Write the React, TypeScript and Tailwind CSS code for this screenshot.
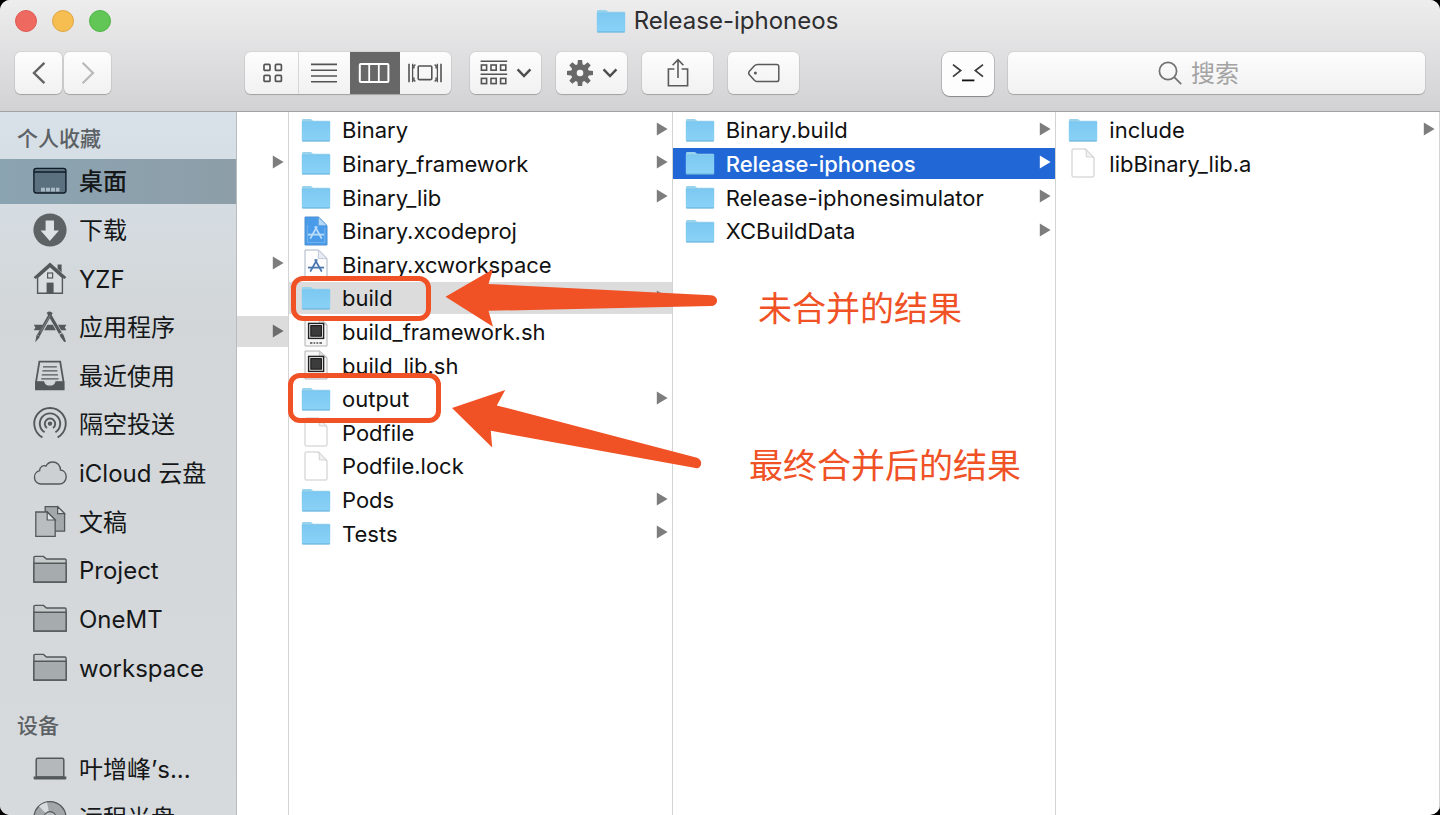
import type { ReactNode } from "react";

const INK = "#53585b";

type IconProps = { children: ReactNode };

function SideIcon({ children }: IconProps) {
  return (
    <svg viewBox="0 0 34 34" className="size-[34px] shrink-0" fill="none" stroke={INK} strokeWidth="1.5" aria-hidden="true">
      {children}
    </svg>
  );
}

const sideIcons: Record<string, ReactNode> = {
  desktop: (
    <SideIcon>
      <rect x="0.9" y="4.4" width="32" height="24.6" rx="2.4" fill="#5c7180" stroke="#101d26" strokeWidth="1.4" />
      <path d="M1 8h32" stroke="#101d26" strokeWidth="1.3" />
      <path d="M8 27.4v-3.6h4v3.6zM13 27.4v-3.6h4v3.6zM18 27.4v-3.6h4v3.6zM23 27.4v-3.6h3.4v3.6z" fill="#a9bac4" stroke="none" />
    </SideIcon>
  ),
  downloads: (
    <SideIcon>
      <circle cx="17" cy="17" r="16.6" fill="#5d6265" stroke="none" />
      <path d="M12.6 7.6h8.4v10h5L16.8 28 7.6 17.6h5z" fill="#dce1e3" stroke="none" />
    </SideIcon>
  ),
  home: (
    <SideIcon>
      <path d="M24.6 2.6h4v8l-4-3.8z" fill={INK} stroke="none" />
      <path d="M4.6 15.6v15.6h24.8V15.6L17 4.4z" fill="#d9dddf" stroke={INK} strokeWidth="1.4" />
      <path d="M.6 15.2 17 .6l16.4 14.6-2.2 1.9L17 4.6 2.8 17.1z" fill={INK} stroke="none" />
      <rect x="14.6" y="11" width="5" height="5" strokeWidth="1.2" />
      <path d="M13.6 20.6h7v10.6h-7z" fill={INK} stroke="none" />
    </SideIcon>
  ),
  apps: (
    <SideIcon>
      <path d="M.8 14.8H10l-3.2 5.4H.8l1.6-2.7zM14.4 14.8h5.4l3 5.4H11.2zM25 14.8h8.4l-1.6 2.7 1.6 2.7h-5.2z" fill={INK} stroke="none" />
      <path d="M18.4 2.2 5.4 25.6" strokeWidth="3" />
      <path d="m3.6 24.8 3.4 2-4.8 5.4z" fill={INK} stroke="none" />
      <path d="m15 2 14 24" strokeWidth="3.2" />
      <path d="m27.2 26.4 3.2-1.8 2.6 6.8-1.8.6z" fill={INK} stroke="none" />
      <path d="M17 5.6 7.4 22.4" stroke="#8c9194" strokeWidth="0.8" />
      <path d="M25.8 24.6l4-2.4" stroke="#d4d8da" strokeWidth="1" />
    </SideIcon>
  ),
  recents: (
    <SideIcon>
      <path d="M6.4 2.6h20.8l3.4 20.6v7.2H3v-7.2z" fill="#d2d6d8" strokeWidth="1.8" />
      <path d="M10 7.8h13.8M9.4 11.8h15M8.8 15.8h16.2M8.2 19.8h17.4" strokeWidth="1.2" />
      <path d="M3 22.8h7.6c.8 3.2 3 4.4 6.2 4.4s5.4-1.2 6.2-4.4h7.6v7.6H3z" fill={INK} strokeWidth="1.2" />
    </SideIcon>
  ),
  airdrop: (
    <SideIcon>
      <circle cx="17" cy="16.6" r="2.2" fill={INK} stroke="none" />
      <path d="M14 21a5.2 5.2 0 1 1 6 0" strokeWidth="1.9" />
      <path d="M11.6 25.2a10.2 10.2 0 1 1 10.8 0" strokeWidth="1.9" />
      <path d="M9.4 30.4a15.7 15.7 0 1 1 15.2 0" strokeWidth="1.9" />
    </SideIcon>
  ),
  cloud: (
    <SideIcon>
      <path d="M8 28a6.8 6.8 0 0 1-1.4-13.4c0-3.6 3.4-5.8 6.4-4.6C14.4 7.4 16.8 6 19.6 6c4.6 0 7.8 3.4 7.9 8 3.3.4 5.7 3.2 5.7 6.8 0 4-3 7.2-7 7.2z" fill="#cdd0d2" strokeWidth="1.4" />
    </SideIcon>
  ),
  documents: (
    <SideIcon>
      <path d="M12.2 1.6h12.4l7 7v17.6H12.2z" fill="#a3a8aa" strokeWidth="1.3" />
      <path d="M24.6 1.6v7h7z" fill="#d9dcde" strokeWidth="1.2" />
      <path d="M2.8 7h11.4l8 8v16.4H2.8z" fill="#b9bdbf" strokeWidth="1.3" />
      <path d="M14.2 7v8h8z" fill="#e2e5e6" strokeWidth="1.2" />
    </SideIcon>
  ),
  folder: (
    <SideIcon>
      <path d="M.9 29V4.6c0-.8.5-1.2 1.2-1.2h8.4l3 2.6h18.4c.8 0 1.2.4 1.2 1.2V29z" fill="#c6cacb" strokeWidth="1.4" />
      <path d="M.9 10.2h32.2V29H.9z" fill="#a6acad" strokeWidth="1.4" />
    </SideIcon>
  ),
  laptop: (
    <SideIcon>
      <path d="M3.2 25V7.8c0-1 .6-1.6 1.6-1.6h24.4c1 0 1.6.6 1.6 1.6V25z" fill="#b5b8ba" strokeWidth="1.5" />
      <path d="M.6 24.4h32.8v1.8c0 .8-.6 1.3-1.4 1.3H2c-.8 0-1.4-.5-1.4-1.3z" fill={INK} stroke="none" />
    </SideIcon>
  ),
  disc: (
    <SideIcon>
      <circle cx="17" cy="16.6" r="16" fill="#a2a6a8" strokeWidth="1.2" />
      <path d="M17 16.6 6 5.2a16 16 0 0 1 8-4zM17 16.6 28 28a16 16 0 0 0 4-5z" fill="#d8dbdc" stroke="none" />
      <circle cx="17" cy="16.6" r="6" fill="#bcc0c2" strokeWidth="1.1" />
      <circle cx="17" cy="16.6" r="2.4" fill="#e6e8e9" strokeWidth="1" />
    </SideIcon>
  ),
};

function FolderGlyph() {
  return (
    <svg viewBox="0 0 30 24" className="h-6 w-[30px]" aria-hidden="true">
      <defs>
        <linearGradient id="folderFront" x1="0" y1="0" x2="0" y2="1">
          <stop offset="0" stopColor="#7cc9f2" />
          <stop offset="1" stopColor="#8ad1f6" />
        </linearGradient>
      </defs>
      <path d="M1 22V2.4C1 1.6 1.5 1 2.3 1h7.2c1.4 0 1.8 1.8 3.2 1.8h15.1c.8 0 1.2.4 1.2 1.2V22z" fill="#98d3ee" />
      <path d="M.8 4h28.4v18c0 .8-.5 1.2-1.3 1.2H2.1c-.8 0-1.3-.4-1.3-1.2z" fill="url(#folderFront)" />
      <path d="M.8 4h28.4" stroke="#79c2e9" strokeWidth="0.7" />
      <path d="M1.2 23h27.6" stroke="#62aed8" strokeWidth="1" />
    </svg>
  );
}

function PageGlyph() {
  return (
    <svg viewBox="0 0 24 30" className="h-[30px] w-6" aria-hidden="true">
      <path d="M1 2c0-.6.4-1 1-1h12.4L23 9.6V28c0 .6-.4 1-1 1H2c-.6 0-1-.4-1-1z" fill="#fff" stroke="#c9c9c9" />
      <path d="M14.4 1c1.4 2.6.6 5.4.8 7.8 2.4.4 5.6-.2 7.8.8z" fill="#f1f1f1" stroke="#c9c9c9" strokeWidth="0.8" />
    </svg>
  );
}

function ProjectGlyph({ filled }: { filled?: boolean }) {
  const line = filled ? "#b9dcfa" : "#4a78ae";
  return (
    <svg viewBox="0 0 24 30" className="h-[30px] w-6" aria-hidden="true">
      <path d="M1 1h13.4L23 9.6V29H1z" fill={filled ? "#4a9bea" : "#fdfdfe"} stroke={filled ? "#4a8fd0" : "#a9b4c4"} />
      <path d="M14.4 1v8.6H23z" fill={filled ? "#b5d8f7" : "#e9edf3"} stroke={filled ? "#5fa3e0" : "#b4bece"} strokeWidth="0.8" />
      {filled && <path d="M3.4 9v17.4h17.4V12" fill="none" stroke="#7db9f0" strokeWidth="0.8" />}
      <path d="M4 18.6h16" stroke={line} strokeWidth="1.8" />
      <path d="m12.8 11-6.2 11M11.2 11l6.2 11" fill="none" stroke={line} strokeWidth="1.7" strokeLinecap="round" />
    </svg>
  );
}

function ShellGlyph() {
  return (
    <svg viewBox="0 0 24 30" className="h-[30px] w-6" aria-hidden="true">
      <path d="M1 1h14.4L23 7.6V29H1z" fill="#f7f7f7" stroke="#b2b2b2" />
      <path d="M15.4 1v6.6H23z" fill="#dedede" stroke="#bcbcbc" strokeWidth="0.8" />
      <rect x="4.6" y="6.4" width="15" height="15" fill="#f0f0f0" stroke="#222" strokeWidth="1.4" />
      <rect x="6.8" y="8.6" width="10.6" height="10.6" fill="#3c3c3c" stroke="#111" strokeWidth="1" />
      <path d="M6 26h2.4M9.6 26h1.6M12.4 26h1.8M15.4 26h2.6" stroke="#777" strokeWidth="2" />
    </svg>
  );
}

type Kind = "folder" | "page" | "xcodeproj" | "xcworkspace" | "shell";

function FileGlyph({ kind }: { kind: Kind }) {
  if (kind === "folder") return <FolderGlyph />;
  if (kind === "page") return <PageGlyph />;
  if (kind === "shell") return <ShellGlyph />;
  return <ProjectGlyph filled={kind === "xcodeproj"} />;
}

function Disclosure() {
  return (
    <svg viewBox="0 0 12 14" className="mb-0.5 h-3.5 w-3 shrink-0 fill-current" aria-hidden="true">
      <path d="M.8.6 11.6 7 .8 13.4z" />
    </svg>
  );
}

type Entry = { name: string; kind: Kind; arrow?: boolean; state?: "path" | "active" };

const columns: Entry[][] = [
  [
    { name: "Binary", kind: "folder", arrow: true },
    { name: "Binary_framework", kind: "folder", arrow: true },
    { name: "Binary_lib", kind: "folder", arrow: true },
    { name: "Binary.xcodeproj", kind: "xcodeproj" },
    { name: "Binary.xcworkspace", kind: "xcworkspace" },
    { name: "build", kind: "folder", arrow: true, state: "path" },
    { name: "build_framework.sh", kind: "shell" },
    { name: "build_lib.sh", kind: "shell" },
    { name: "output", kind: "folder", arrow: true },
    { name: "Podfile", kind: "page" },
    { name: "Podfile.lock", kind: "page" },
    { name: "Pods", kind: "folder", arrow: true },
    { name: "Tests", kind: "folder", arrow: true },
  ],
  [
    { name: "Binary.build", kind: "folder", arrow: true },
    { name: "Release-iphoneos", kind: "folder", arrow: true, state: "active" },
    { name: "Release-iphonesimulator", kind: "folder", arrow: true },
    { name: "XCBuildData", kind: "folder", arrow: true },
  ],
  [
    { name: "include", kind: "folder", arrow: true },
    { name: "libBinary_lib.a", kind: "page" },
  ],
];

const rowTone = {
  none: "text-[#111]",
  path: "bg-[#dcdcdc] text-[#111]",
  active: "bg-[#2167d6] text-white font-medium",
};

const arrowTone = {
  none: "text-[#7d7d7d]",
  path: "text-[#7d7d7d]",
  active: "text-white",
};

const listGrid = "grid h-[707px] grid-rows-[repeat(21,minmax(0,1fr))] pt-px";

function FileColumn({ entries }: { entries: Entry[] }) {
  return (
    <div className="min-w-0 flex-1 overflow-hidden border-r border-[#d3d3d3]">
      <ul className={listGrid}>
        {entries.map((e) => (
          <li key={e.name} className="flex py-px">
            <button type="button" className={`flex w-full items-center pr-1 pl-3 text-left text-[22px] leading-none ${rowTone[e.state ?? "none"]}`}>
              <span className="flex w-[30px] shrink-0 justify-center">
                <FileGlyph kind={e.kind} />
              </span>
              <span className="ml-[11px] flex-1 pt-px whitespace-nowrap">{e.name}</span>
              {e.arrow && (
                <span className={arrowTone[e.state ?? "none"]}>
                  <Disclosure />
                </span>
              )}
            </button>
          </li>
        ))}
      </ul>
    </div>
  );
}

type Place = { label: string; icon: string; current?: boolean };

const favorites: Place[] = [
  { label: "桌面", icon: "desktop", current: true },
  { label: "下载", icon: "downloads" },
  { label: "YZF", icon: "home" },
  { label: "应用程序", icon: "apps" },
  { label: "最近使用", icon: "recents" },
  { label: "隔空投送", icon: "airdrop" },
  { label: "iCloud 云盘", icon: "cloud" },
  { label: "文稿", icon: "documents" },
  { label: "Project", icon: "folder" },
  { label: "OneMT", icon: "folder" },
  { label: "workspace", icon: "folder" },
];

const devices: Place[] = [
  { label: "叶增峰’s...", icon: "laptop" },
  { label: "远程光盘", icon: "disc" },
];

function PlaceRow({ place }: { place: Place }) {
  return (
    <li className="flex py-0.5">
      <button
        type="button"
        className={`flex w-full items-center gap-3 pl-[33px] text-left text-2xl leading-none whitespace-nowrap text-[#151719] ${place.current ? "bg-linear-to-r from-[#8ba4b2] to-[#8d9ea8] font-medium" : ""}`}
      >
        {sideIcons[place.icon]}
        <span className="pt-0.5">{place.label}</span>
      </button>
    </li>
  );
}

function Sidebar() {
  return (
    <nav aria-label="边栏" className="w-[237px] shrink-0 overflow-hidden border-r border-[#b9bcbe] bg-linear-to-b from-[#d8e1e9] via-[#d2d6d8] via-30% to-[#d7dadc]">
      <h2 className="flex h-[45px] items-center pt-2 pl-[17px] text-[21px] leading-none font-medium text-[#5c6165]">个人收藏</h2>
      <ul className="grid h-[535px] grid-rows-[repeat(11,minmax(0,1fr))]">
        {favorites.map((p) => (
          <PlaceRow key={p.label} place={p} />
        ))}
      </ul>
      <h2 className="flex h-[53px] items-center pt-3.5 pl-[17px] text-[21px] leading-none font-medium text-[#5c6165]">设备</h2>
      <ul className="grid h-[97px] grid-rows-2">
        {devices.map((p) => (
          <PlaceRow key={p.label} place={p} />
        ))}
      </ul>
    </nav>
  );
}

const buttonSkin = "bg-linear-to-b from-[#fdfdfd] to-[#f1f1f1] shadow-[0_0_0_1px_rgba(0,0,0,0.05),0_1px_1px_rgba(0,0,0,0.2)]";

function ToolButton({ label, width, children }: { label: string; width: string; children: ReactNode }) {
  return (
    <button type="button" aria-label={label} className={`flex h-[42px] items-center justify-center gap-2 rounded-md ${width} ${buttonSkin}`}>
      {children}
    </button>
  );
}

function ChevronDown() {
  return (
    <svg viewBox="0 0 16 10" className="h-2.5 w-4" fill="none" stroke="#4e4e4e" strokeWidth="2.5" aria-hidden="true">
      <path d="m1.6 1.4 6.4 6.6 6.4-6.6" />
    </svg>
  );
}

function Gear() {
  return (
    <svg viewBox="-14 -14 28 28" className="size-7" aria-hidden="true">
      <g fill="#686868">
        {[0, 45, 90, 135, 180, 225, 270, 315].map((a) => (
          <path key={a} d="M-2.1-13h4.2L2.8-7h-5.6z" transform={`rotate(${a})`} />
        ))}
      </g>
      <circle r="6.2" fill="none" stroke="#686868" strokeWidth="5.8" />
    </svg>
  );
}

function Toolbar() {
  return (
    <div className="flex h-[68px] items-start px-[15px] pt-[9px]">
      <div className="flex gap-0.5">
        <ToolButton label="后退" width="w-[47px]">
          <svg viewBox="0 0 14 24" className="h-6 w-3.5" fill="none" stroke="#636363" strokeWidth="2.4" aria-hidden="true">
            <path d="M12.4 1.8 2 12l10.4 10.2" />
          </svg>
        </ToolButton>
        <ToolButton label="前进" width="w-[47px]">
          <svg viewBox="0 0 14 24" className="h-6 w-3.5" fill="none" stroke="#b9b9b9" strokeWidth="2.2" aria-hidden="true">
            <path d="M1.6 1.8 12 12 1.6 22.2" />
          </svg>
        </ToolButton>
      </div>

      <div className={`ml-[134px] flex h-[42px] w-[206px] overflow-hidden rounded-md ${buttonSkin}`}>
        <button type="button" aria-label="图标显示" className="flex w-[54px] items-center justify-center border-r border-[#d6d6d6] pl-0.5">
          <svg viewBox="0 0 20 20" className="size-5" fill="none" stroke="#545454" strokeWidth="1.7" aria-hidden="true">
            <rect x="1" y="1.4" width="6" height="6" rx="1" />
            <rect x="12.4" y="1.4" width="6" height="6" rx="1" />
            <rect x="1" y="12.4" width="6" height="6" rx="1" />
            <rect x="12.4" y="12.4" width="6" height="6" rx="1" />
          </svg>
        </button>
        <button type="button" aria-label="列表显示" className="flex flex-1 items-center justify-center pr-0.5">
          <svg viewBox="0 0 26 20" className="h-5 w-[26px]" stroke="#545454" strokeWidth="1.6" aria-hidden="true">
            <path d="M0 1.4h26M0 7.2h26M0 13h26M0 18.8h26" />
          </svg>
        </button>
        <button type="button" aria-label="分栏显示" aria-pressed="true" className="flex w-[50px] items-center justify-center bg-[#676767] pr-0.5">
          <svg viewBox="0 0 32 22" className="h-[22px] w-8" fill="none" stroke="#fff" aria-hidden="true">
            <rect x="1.8" y="2" width="28.6" height="18" rx="1" strokeWidth="2" />
            <path d="M11.2 2v18M20.8 2v18" strokeWidth="1.8" />
          </svg>
        </button>
        <button type="button" aria-label="画廊显示" className="flex w-[51px] items-center justify-center pr-0.5">
          <svg viewBox="0 0 34 20" className="h-5 w-[34px]" fill="none" stroke="#545454" strokeWidth="1.6" aria-hidden="true">
            <rect x="10.2" y="3" width="13.6" height="13.6" rx="1" />
            <path d="M1 .8v18.4M33 .8v18.4" strokeWidth="1.6" />
            <path d="M4.6.8v18.4M29.4.8v18.4M7.4 1.6l-1.4 1v3M7.4 18.4l-1.4-1v-3M26.6 1.6l1.4 1v3M26.6 18.4l1.4-1v-3" strokeWidth="1.3" />
          </svg>
        </button>
      </div>

      <div className="ml-[19px] flex gap-[15px]">
        <ToolButton label="排列" width="w-[71px]">
          <svg viewBox="0 0 28 26" className="h-[26px] w-7" fill="none" stroke="#545454" strokeWidth="1.6" aria-hidden="true">
            <path d="M.6 1.2h26.6M.6 14.2h26.6" />
            <rect x="1.4" y="5" width="5.2" height="5.2" />
            <rect x="11" y="5" width="5.2" height="5.2" />
            <rect x="20.6" y="5" width="5.2" height="5.2" />
            <rect x="1.4" y="18.4" width="5.2" height="5.2" />
            <rect x="11" y="18.4" width="5.2" height="5.2" />
            <rect x="20.6" y="18.4" width="5.2" height="5.2" />
          </svg>
          <ChevronDown />
        </ToolButton>
        <ToolButton label="操作" width="w-[71px]">
          <Gear />
          <ChevronDown />
        </ToolButton>
        <ToolButton label="共享" width="w-[71px]">
          <svg viewBox="0 0 22 30" className="h-[30px] w-[22px]" fill="none" stroke="#5a5a5a" strokeWidth="1.6" aria-hidden="true">
            <path d="M7.4 11H1.4v16.8h19.2V11h-6M11 20V1.6M5.6 7.2 11 1.6l5.4 5.6" />
          </svg>
        </ToolButton>
        <ToolButton label="标记" width="w-[71px]">
          <svg viewBox="0 0 32 20" className="h-5 w-8" fill="none" stroke="#5a5a5a" strokeWidth="1.5" aria-hidden="true">
            <path d="M9.4 1.4h19.2c1.4 0 2.2.8 2.2 2.2v12.8c0 1.4-.8 2.2-2.2 2.2H9.4c-1.4 0-2.2-.6-3-1.4L1.6 12a3 3 0 0 1 0-4l4.8-5.2c.8-.8 1.6-1.4 3-1.4z" />
            <circle cx="7.4" cy="10" r="1.5" fill="#5a5a5a" stroke="none" />
          </svg>
        </ToolButton>
      </div>

      <button type="button" aria-label="终端" className="ml-auto flex h-11 w-[52px] items-center justify-center rounded-lg bg-[#fdfdfd] pb-0.5 shadow-[0_0_0_1px_rgba(0,0,0,0.14),0_1px_1px_rgba(0,0,0,0.26)]">
        <svg viewBox="0 0 32 20" className="h-5 w-8" fill="none" stroke="#3c3c3c" strokeWidth="1.8" aria-hidden="true">
          <path d="m1 1.6 7.6 6L1 13.6M31 1.6l-7.6 6 7.6 6" />
          <path d="M10 17.4h12.4" stroke="#111" />
        </svg>
      </button>
      <label className={`ml-3.5 flex h-[42px] w-[417px] items-center justify-center gap-[9px] rounded-md ${buttonSkin}`}>
        <svg viewBox="0 0 24 24" className="size-6" fill="none" stroke="#717171" strokeWidth="1.7" aria-hidden="true">
          <circle cx="10" cy="10" r="8.6" />
          <path d="m16.2 16.2 7 7" />
        </svg>
        <input type="search" aria-label="搜索" placeholder="搜索" className="w-[84px] bg-transparent pt-0.5 text-2xl text-[#333] outline-none placeholder:text-[#a3a3a3]" />
      </label>
    </div>
  );
}

function TitleBar() {
  return (
    <div className="grid h-[43px] grid-cols-[1fr_auto_1fr] items-center px-[15px] pb-px">
      <div className="flex gap-[15px]">
        <button type="button" aria-label="关闭" className="size-[22px] rounded-full border border-[#dd5a52] bg-[#ee6a60]" />
        <button type="button" aria-label="最小化" className="size-[22px] rounded-full border border-[#dfa645] bg-[#f6be50]" />
        <button type="button" aria-label="缩放" className="size-[22px] rounded-full border border-[#4fb446] bg-[#61c656]" />
      </div>
      <h1 className="flex items-center gap-2 pr-1.5 text-2xl leading-none text-[#2e2e30]">
        <FolderGlyph />
        Release-iphoneos
      </h1>
    </div>
  );
}

function Annotations() {
  return (
    <div className="pointer-events-none absolute inset-0 text-[#f05125]">
      <div className="absolute top-[164px] left-[291px] h-[45px] w-[140px] rounded-xl border-[5px] border-current" />
      <div className="absolute top-[261px] left-[288px] h-[50px] w-[153px] rounded-xl border-[5px] border-current" />
      <svg viewBox="440 260 290 220" className="absolute top-[148px] left-[440px] h-[220px] w-[290px] fill-current" aria-hidden="true">
        <path d="M445.5 296.7 493 269.3 488.5 284 711 295.2C719 295.6 719 305.8 711 306L488.5 310.8 493 326.8z" />
        <path d="M452 408 505.2 390 496.8 405.4 697 457.8C703.4 459.6 702 469.6 695.6 468L490.8 430.8 492.2 447.4z" />
      </svg>
      <p className="absolute top-[177px] left-[758px] text-[34px] leading-10 whitespace-nowrap">未合并的结果</p>
      <p className="absolute top-[334px] left-[749px] text-[34px] leading-10 whitespace-nowrap">最终合并后的结果</p>
    </div>
  );
}

export default function App() {
  return (
    <div className="h-screen overflow-hidden bg-black font-['Inter','Noto_Sans_CJK_SC',sans-serif]">
      <div className="flex h-full flex-col overflow-hidden rounded-[10px] bg-white">
        <header className="shrink-0 border-b border-[#a2a2a2] bg-linear-to-b from-[#ededee] to-[#d2d2d4]">
          <TitleBar />
          <Toolbar />
        </header>
        <main className="relative flex min-h-0 flex-1">
          <Sidebar />
          <div className="w-[52px] shrink-0 overflow-hidden border-r border-[#d3d3d3]">
            <ul className={listGrid}>
              <li className="row-start-2 flex items-center justify-end pr-1 text-[#7d7d7d]">
                <Disclosure />
              </li>
              <li className="row-start-5 flex items-center justify-end pr-1 text-[#7d7d7d]">
                <Disclosure />
              </li>
              <li className="row-start-7 my-px flex items-center justify-end bg-[#dcdcdc] pr-1 text-[#6d6d6d]">
                <Disclosure />
              </li>
            </ul>
          </div>
          {columns.map((entries) => (
            <FileColumn key={entries[0].name} entries={entries} />
          ))}
          <Annotations />
        </main>
      </div>
    </div>
  );
}
